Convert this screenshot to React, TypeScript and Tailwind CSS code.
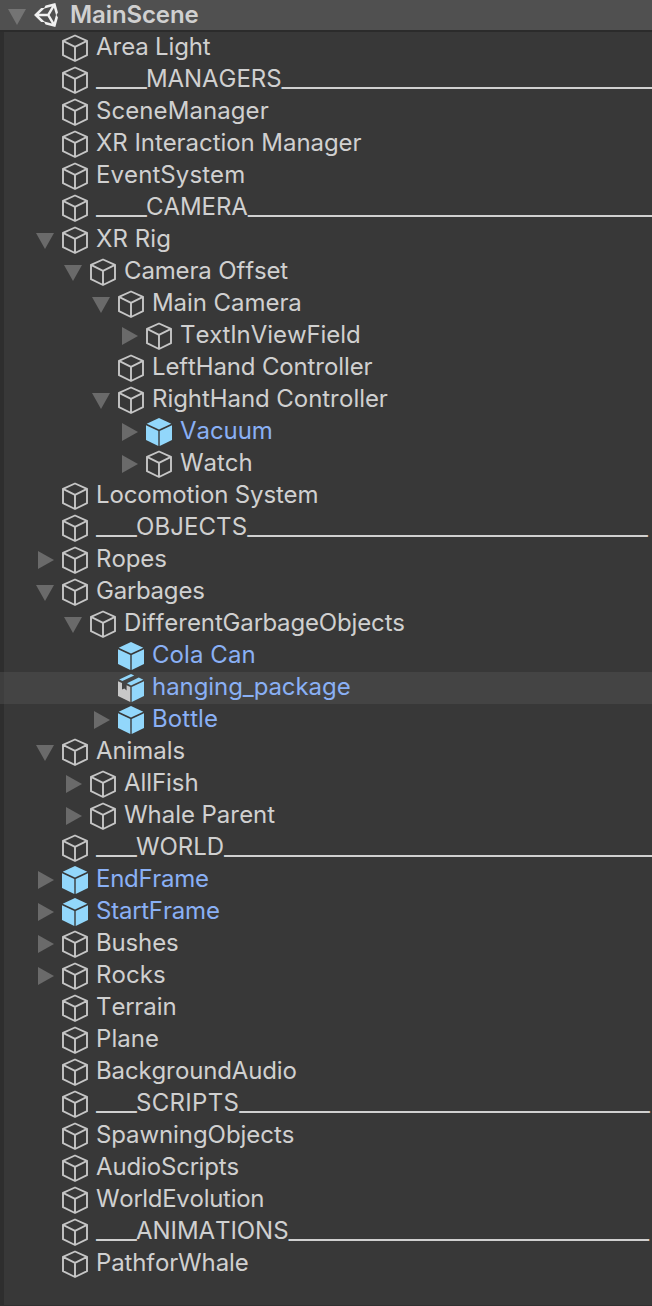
type Kind = "object" | "prefab" | "model";
type Arrow = "open" | "closed" | "none";
type Spacing = "tight" | "snug" | "normal" | "loose" | "wide";

interface Item {
  label: string;
  depth: number;
  kind?: Kind;
  arrow?: Arrow;
  hovered?: boolean;
  lead?: number;
  trail?: number;
  spacing?: Spacing;
}

const items: Item[] = [
  { label: "Area Light", depth: 0, spacing: "snug" },
  { label: "MANAGERS", depth: 0, lead: 5, trail: 37 },
  { label: "SceneManager", depth: 0, spacing: "loose" },
  { label: "XR Interaction Manager", depth: 0 },
  { label: "EventSystem", depth: 0, spacing: "loose" },
  { label: "CAMERA", depth: 0, lead: 5, trail: 41 },
  { label: "XR Rig", depth: 0, arrow: "open", spacing: "loose" },
  { label: "Camera Offset", depth: 1, arrow: "open", spacing: "snug" },
  { label: "Main Camera", depth: 2, arrow: "open" },
  { label: "TextInViewField", depth: 3, arrow: "closed" },
  { label: "LeftHand Controller", depth: 2, spacing: "snug" },
  { label: "RightHand Controller", depth: 2, arrow: "open" },
  { label: "Vacuum", depth: 3, arrow: "closed", kind: "prefab" },
  { label: "Watch", depth: 3, arrow: "closed" },
  { label: "Locomotion System", depth: 0, spacing: "snug" },
  { label: "OBJECTS", depth: 0, lead: 4, trail: 40, spacing: "loose" },
  { label: "Ropes", depth: 0, arrow: "closed" },
  { label: "Garbages", depth: 0, arrow: "open", spacing: "snug" },
  { label: "DifferentGarbageObjects", depth: 1, arrow: "open", spacing: "snug" },
  { label: "Cola Can", depth: 2, kind: "prefab", spacing: "loose" },
  { label: "hanging_package", depth: 2, kind: "model", hovered: true },
  { label: "Bottle", depth: 2, arrow: "closed", kind: "prefab", spacing: "loose" },
  { label: "Animals", depth: 0, arrow: "open" },
  { label: "AllFish", depth: 1, arrow: "closed" },
  { label: "Whale Parent", depth: 1, arrow: "closed" },
  { label: "WORLD", depth: 0, lead: 4, trail: 43 },
  { label: "EndFrame", depth: 0, arrow: "closed", kind: "prefab", spacing: "tight" },
  { label: "StartFrame", depth: 0, arrow: "closed", kind: "prefab", spacing: "snug" },
  { label: "Bushes", depth: 0, arrow: "closed", spacing: "snug" },
  { label: "Rocks", depth: 0, arrow: "closed", spacing: "loose" },
  { label: "Terrain", depth: 0 },
  { label: "Plane", depth: 0, spacing: "loose" },
  { label: "BackgroundAudio", depth: 0, spacing: "snug" },
  { label: "SCRIPTS", depth: 0, lead: 4, trail: 41, spacing: "wide" },
  { label: "SpawningObjects", depth: 0 },
  { label: "AudioScripts", depth: 0, spacing: "snug" },
  { label: "WorldEvolution", depth: 0, spacing: "tight" },
  { label: "ANIMATIONS", depth: 0, lead: 4, trail: 36 },
  { label: "PathforWhale", depth: 0, spacing: "snug" },
];

const indents = ["pl-9", "pl-16", "pl-[92px]", "pl-[120px]"];

const spacings: Record<Spacing, string> = {
  tight: "tracking-[-0.28px]",
  snug: "tracking-[-0.15px]",
  normal: "tracking-[-0.06px]",
  loose: "tracking-[0.08px]",
  wide: "tracking-[0.3px]",
};

function Foldout({ arrow = "none" }: { arrow?: Arrow }) {
  return (
    <svg className="h-8 w-[26px] shrink-0" viewBox="0 0 26 32" fill="#6a6a6a">
      {arrow === "open" && <path d="M0 9h18L9 25z" />}
      {arrow === "closed" && <path d="M2 7v18l16-9z" />}
    </svg>
  );
}

function ItemIcon({ kind = "object" }: { kind?: Kind }) {
  return (
    <svg className="h-8 w-[26px] shrink-0" viewBox="0 0 26 32">
      {kind === "object" && (
        <path
          d="M13 3.5 25 8.8v14.4L13 29 1 23.2V8.8zM1 8.8l12 6L25 8.8M13 14.8V29"
          fill="none"
          stroke="#c6c6c6"
          strokeWidth="1.9"
          strokeLinejoin="round"
        />
      )}
      {kind === "prefab" && (
        <g fill="#92d7fb">
          <path d="M13 2 25.3 7.8 13 13.6.7 7.8z" />
          <path d="M0 9.2 12.3 15v15L0 24z" />
          <path d="M26 9.2 13.7 15v15L26 24z" />
        </g>
      )}
      {kind === "model" && (
        <>
          <path d="M0 9.2 4 11.1v6.4l2.4-1.1 2.2 2.2v-5.4l3.7 1.8v15L0 24z" fill="#c8c8c8" />
          <g fill="#92d7fb">
            <path d="M1.2 7.6 13 2l3.2 1.5L4.4 9.1z" />
            <path d="M9 11.2 20.8 5.6l4.5 2.2L13 13.5z" />
            <path d="M26 9.2 13.7 15v15L26 24z" />
          </g>
        </>
      )}
    </svg>
  );
}

function Underscores({ count }: { count: number }) {
  return <span className="tracking-[-0.95px]">{"_".repeat(count)}</span>;
}

function Row({ item }: { item: Item }) {
  const color = item.kind ? "text-[#8ab0f5]" : "text-[#d0d0d0]";
  return (
    <div
      className={`flex h-8 items-start border-l-4 ${indents[item.depth - 0]} ${
        item.hovered ? "border-[#3e3e3e] bg-[#444444]" : "border-[#2e2e2e]"
      }`}
    >
      <div className="-ml-1 flex">
        <Foldout arrow={item.arrow} />
        <ItemIcon kind={item.kind} />
        <span
          className={`ml-2 text-2xl leading-[30px] whitespace-pre [font-kerning:none] ${color} ${
            spacings[item.spacing ?? "normal"]
          }`}
        >
          {item.lead && <Underscores count={item.lead} />}
          {item.label}
          {item.trail && <Underscores count={item.trail} />}
        </span>
      </div>
    </div>
  );
}

export default function App() {
  return (
    <div className="flex h-[1306px] w-[652px] flex-col overflow-hidden bg-[#383838] font-['Inter',sans-serif]">
      <header className="flex h-8 shrink-0 items-start border-b-2 border-[#2b2b2b] bg-[#505050] pl-2">
        <svg className="h-[30px] w-[26px] shrink-0" viewBox="0 0 26 30" fill="#747474">
          <path d="M0 9h18L9 25z" />
        </svg>
        <svg className="mt-[3px] size-6 shrink-0" viewBox="15 14 484 484" fill="#f0f0f0">
          <path d="M498.11 206.4 445.31 14.72 248.2 66.08 219 116.14l-59.2-.43L15.67 256 159.8 396.28l59.2-.43 29.2 50.06 197.11 51.36 52.8-191.62-30-49.63zM223.77 124.2 374.55 86.51 288 232.33H114.87zm0 263.63L114.87 279.71H288l86.55 145.81zm193 14L330.17 256l86.58-145.84L458.56 256z" />
        </svg>
        <h1 className="ml-3 text-2xl leading-[30px] font-semibold tracking-[-0.1px] text-[#d0d0d0]">MainScene</h1>
      </header>
      <main className="flex grow flex-col border-b border-[#303030]">
        {items.map((item) => (
          <Row key={item.label} item={item} />
        ))}
        <div className="grow border-l-4 border-[#2e2e2e]" />
      </main>
    </div>
  );
}
